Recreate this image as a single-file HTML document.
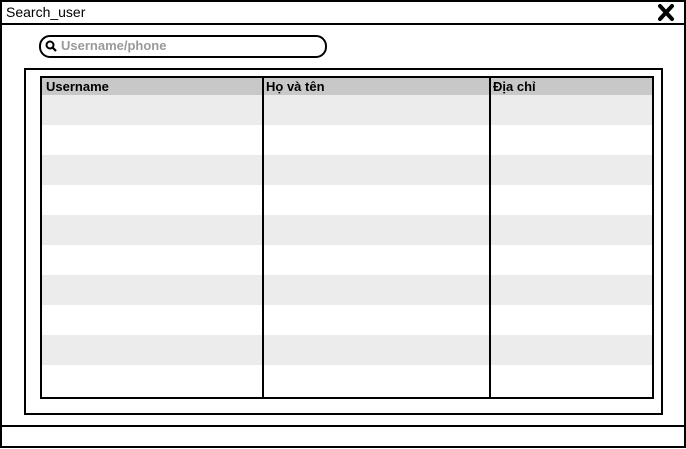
<!DOCTYPE html>
<html><head><style>
*{margin:0;padding:0;box-sizing:border-box}
body{width:686px;height:449px;background:#fff;position:relative;overflow:hidden;font-family:"Liberation Sans",sans-serif}
.a{position:absolute}
</style></head><body>
<div class="a" style="left:0;top:0;width:686px;height:426px;border:2px solid #000;border-bottom:none"></div>
<div class="a" style="left:0;top:23px;width:686px;height:2px;background:#000"></div>
<div class="a" style="left:6px;top:4px;font-size:14px;color:#000">Search_user</div>
<svg class="a" style="left:657px;top:4px" width="18" height="17" viewBox="0 0 18 17"><path d="M3 2L15 15M15 2L3 15" stroke="#000" stroke-width="4" stroke-linecap="round"/></svg>
<div class="a" style="left:39px;top:35px;width:288px;height:23px;border:2px solid #000;border-radius:11px"></div>
<svg class="a" style="left:45px;top:40px" width="13" height="13" viewBox="0 0 13 13"><circle cx="5" cy="5" r="3.5" fill="none" stroke="#000" stroke-width="2"/><path d="M7.5 7.5L11 11" stroke="#000" stroke-width="2.2"/></svg>
<div class="a" style="left:61px;top:38px;font-size:13px;font-weight:bold;color:#999">Username/phone</div>
<div class="a" style="left:24px;top:68px;width:639px;height:347px;border:2px solid #000"></div>
<div class="a" style="left:40px;top:76px;width:614px;height:323px;border:2px solid #000;overflow:hidden;background:#fff">
<div class="a" style="left:0;top:0;width:100%;height:17px;background:#c8c8c8"></div>
<div class="a" style="left:0;top:17px;width:100%;height:30px;background:#ececec"></div>
<div class="a" style="left:0;top:77px;width:100%;height:30px;background:#ececec"></div>
<div class="a" style="left:0;top:137px;width:100%;height:30px;background:#ececec"></div>
<div class="a" style="left:0;top:197px;width:100%;height:30px;background:#ececec"></div>
<div class="a" style="left:0;top:257px;width:100%;height:30px;background:#ececec"></div>
<div class="a" style="left:220px;top:0;width:2px;height:100%;background:#000"></div>
<div class="a" style="left:447px;top:0;width:2px;height:100%;background:#000"></div>
<div class="a" style="left:4px;top:1px;font-size:13px;font-weight:bold">Username</div>
<div class="a" style="left:224px;top:1px;font-size:13px;font-weight:bold">Họ và tên</div>
<div class="a" style="left:451px;top:1px;font-size:13px;font-weight:bold">Địa chỉ</div>
</div>
<div class="a" style="left:0;top:425px;width:686px;height:23px;border:2px solid #000"></div>
</body></html>
